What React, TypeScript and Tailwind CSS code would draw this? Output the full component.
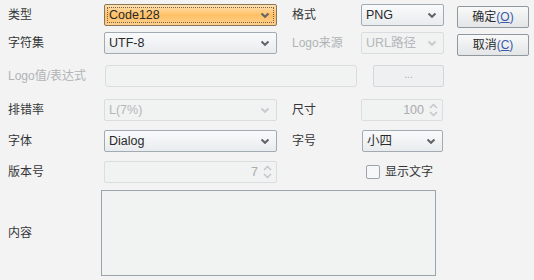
import React from "react"

const font = { fontFamily: '"Liberation Sans", "Noto Sans CJK SC", sans-serif' }

const Chevron = ({ disabled }: { disabled?: boolean }) => (
  <svg width="10" height="7" viewBox="0 0 10 7" className="shrink-0">
    <path d="M1.5 1.5 L5 4.8 L8.5 1.5" fill="none" stroke={disabled ? "#c7cbcf" : "#5f6468"} strokeWidth="2" />
  </svg>
)

const Spin = () => (
  <svg width="9" height="16" viewBox="0 0 9 16" className="shrink-0">
    <path d="M1 6 L4.5 2.5 L8 6" fill="none" stroke="#c3c7cb" strokeWidth="1.5" />
    <path d="M1 10 L4.5 13.5 L8 10" fill="none" stroke="#c3c7cb" strokeWidth="1.5" />
  </svg>
)

type ComboProps = { value: string; w: string; disabled?: boolean; focused?: boolean }

const Combo = ({ value, w, disabled, focused }: ComboProps) => {
  if (focused)
    return (
      <div className={`${w} h-[22px] rounded-[2px] border border-[#8a7658] bg-gradient-to-b from-[#ffe2b4] via-[#ffc064] to-[#ffd08c] p-[2px]`}>
        <div className="h-full flex items-center justify-between pl-[1px] pr-[3px] border border-dotted border-[#7a6448]">
          <span className="text-[12.5px] text-[#2a2a2a]">{value}</span>
          <Chevron />
        </div>
      </div>
    )
  return (
    <div
      className={`${w} h-[22px] rounded-[2px] border flex items-center justify-between pl-[4px] pr-[6px] ${
        disabled
          ? "border-[#d9dde0] bg-[#f1f2f2] text-[#b4b7ba]"
          : "border-[#a3abb2] bg-gradient-to-b from-[#f9fafb] to-[#e9ecee] text-[#2a2a2a]"
      }`}
    >
      <span className="text-[12.5px]">{value}</span>
      <Chevron disabled={disabled} />
    </div>
  )
}

const Spinner = ({ value, w }: { value: string; w: string }) => (
  <div className={`${w} h-[22px] rounded-[2px] border border-[#dadee1] bg-[#f1f2f2] flex items-center justify-end gap-[5px] pr-[4px]`}>
    <span className="text-[12.5px] text-[#a9acb0]">{value}</span>
    <Spin />
  </div>
)

const Btn = ({ label, k }: { label: string; k: string }) => (
  <div className="w-[72px] h-[22px] rounded-[2px] border border-[#8f979f] bg-gradient-to-b from-[#f9f9f9] to-[#e3e5e7] flex items-center justify-center text-[12px] text-[#2a2a2a]">
    {label}
    <span className="text-[#3a5aa8]">
      (<span className="underline">{k}</span>)
    </span>
  </div>
)

const Label = ({ children, disabled, w }: { children: React.ReactNode; disabled?: boolean; w: string }) => (
  <div className={`${w} shrink-0 text-[12px] ${disabled ? "text-[#b0b3b6]" : "text-[#333638]"}`}>{children}</div>
)

export default function App() {
  return (
    <div className="w-[534px] h-[280px] bg-[#f3f3f3] relative overflow-hidden" style={font}>
      <div className="flex pt-[4px]">
        <div className="flex flex-col">
          {/* row 1 */}
          <div className="flex items-center">
            <Label w="w-[104px] pl-[8px]">类型</Label>
            <Combo value="Code128" w="w-[173px]" focused />
            <Label w="w-[84px] pl-[15px]">格式</Label>
            <Combo value="PNG" w="w-[83px]" />
          </div>
          {/* row 2 */}
          <div className="flex items-center mt-[6px]">
            <Label w="w-[104px] pl-[8px]">字符集</Label>
            <Combo value="UTF-8" w="w-[173px]" />
            <Label w="w-[84px] pl-[15px]" disabled>Logo来源</Label>
            <Combo value="URL路径" w="w-[83px]" disabled />
          </div>
          {/* row 3 */}
          <div className="flex items-center mt-[11px]">
            <Label w="w-[105px] pl-[8px]" disabled>Logo值/表达式</Label>
            <div className="w-[252px] h-[22px] rounded-[3px] border border-[#d9dde0] bg-[#f1f2f2]" />
            <div className="w-[16px]" />
            <div className="w-[71px] h-[22px] rounded-[2px] border border-[#d3d7da] bg-[#eff0f1] flex items-center justify-center text-[10px] text-[#a6a9ac] leading-none pb-[3px]">
              ...
            </div>
          </div>
          {/* row 4 */}
          <div className="flex items-center mt-[12px]">
            <Label w="w-[104px] pl-[8px]">排错率</Label>
            <Combo value="L(7%)" w="w-[173px]" disabled />
            <Label w="w-[84px] pl-[15px]">尺寸</Label>
            <Spinner value="100" w="w-[82px]" />
          </div>
          {/* row 5 */}
          <div className="flex items-center mt-[9px]">
            <Label w="w-[104px] pl-[8px]">字体</Label>
            <Combo value="Dialog" w="w-[173px]" />
            <Label w="w-[85px] pl-[15px]">字号</Label>
            <Combo value="小四" w="w-[81px]" />
          </div>
          {/* row 6 */}
          <div className="flex items-center mt-[9px]">
            <Label w="w-[104px] pl-[8px]">版本号</Label>
            <Spinner value="7" w="w-[173px]" />
            <div className="w-[89px]" />
            <div className="flex items-center gap-[5px]">
              <div className="w-[14px] h-[14px] rounded-[2px] border border-[#9da4aa] bg-[#f6f7f8]" />
              <span className="text-[12px] text-[#333638]">显示文字</span>
            </div>
          </div>
          {/* row 7 */}
          <div className="flex items-center mt-[7px]">
            <Label w="w-[101px] pl-[8px]">内容</Label>
            <div className="w-[335px] h-[86px] border border-[#9aa4ad] bg-[#f1f2f2]" />
          </div>
        </div>
        <div className="flex flex-col ml-[13px] pt-[2px] gap-[6px]">
          <Btn label="确定" k="O" />
          <Btn label="取消" k="C" />
        </div>
      </div>
    </div>
  )
}
